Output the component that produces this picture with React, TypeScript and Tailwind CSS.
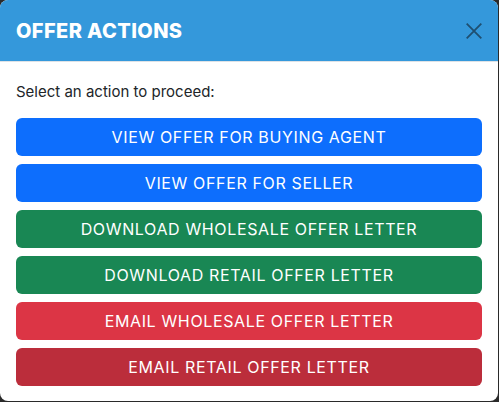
import type { ReactNode } from "react";

const actions: { label: string; tone: string }[] = [
  { label: "View offer for buying agent", tone: "bg-[#0d6efd]" },
  { label: "View offer for seller", tone: "bg-[#0d6efd]" },
  { label: "Download wholesale offer letter", tone: "bg-[#198754]" },
  { label: "Download retail offer letter", tone: "bg-[#198754]" },
  { label: "Email wholesale offer letter", tone: "bg-[#dc3545]" },
  { label: "Email retail offer letter", tone: "bg-[#bb2d3b]" },
];

export default function App() {
  return (
    <div
      className="h-[402px] w-[499px] bg-[#2a2a2a]"
      style={{ fontFamily: "Inter, 'Noto Sans', sans-serif" }}
    >
      <div className="flex h-[401px] w-[498px] flex-col overflow-hidden rounded-lg bg-white">
        <header className="flex h-[62px] items-center justify-between border-b border-[#dee2e6] bg-[#3498db] pl-4 pr-4">
          <h1 className="text-[20px] font-extrabold tracking-[0.02em] text-white">
            OFFER ACTIONS
          </h1>
          <CloseIcon />
        </header>
        <div className="flex flex-col px-4 pt-[19px]">
          <p className="text-[15px] text-[#212529]">Select an action to proceed:</p>
          <div className="mt-[14px] flex flex-col gap-[8px]">
            {actions.map((a) => (
              <ActionButton key={a.label} tone={a.tone}>
                {a.label}
              </ActionButton>
            ))}
          </div>
        </div>
      </div>
    </div>
  );
}

function ActionButton({ tone, children }: { tone: string; children: ReactNode }) {
  return (
    <button
      className={`flex h-[38px] w-full items-center justify-center rounded-md text-[16px] uppercase tracking-[0.04em] text-white ${tone}`}
    >
      {children}
    </button>
  );
}

function CloseIcon() {
  return (
    <svg width="18" height="18" viewBox="0 0 16 16" className="mr-[-1px]">
      <path
        d="M1.5 1.5l13 13M14.5 1.5l-13 13"
        stroke="#1f4f70"
        strokeWidth="1.6"
        fill="none"
      />
    </svg>
  );
}
